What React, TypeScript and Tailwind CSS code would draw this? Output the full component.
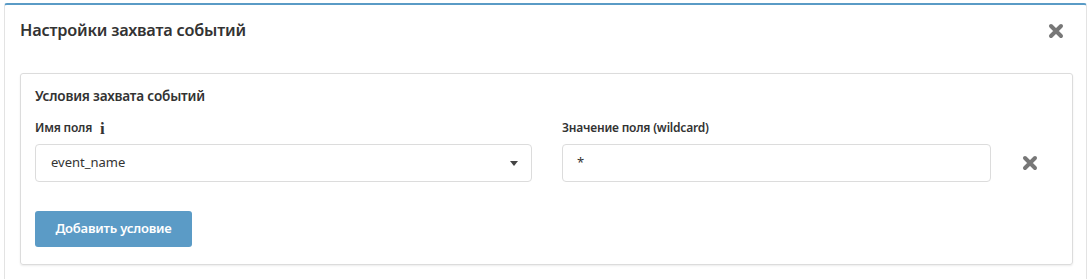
import React from "react";

const TimesIcon = ({ className = "" }: { className?: string }) => (
  <svg viewBox="0 0 16 16" className={className} aria-hidden="true">
    <path
      d="M3 3 L13 13 M13 3 L3 13"
      stroke="currentColor"
      strokeWidth="4"
      strokeLinecap="round"
    />
  </svg>
);

const App = () => {
  return (
    <div
      className="h-[279px] w-[1092px] overflow-hidden bg-white pl-[4px] pr-[5px] pt-[3px] text-[#333]"
      style={{ fontFamily: '"Noto Sans", "Open Sans", sans-serif' }}
    >
      <div className="h-[300px] rounded-t-[3px] border border-t-2 border-[#e3e3e3] border-t-[#5a9bc6] bg-white">
        {/* Header */}
        <div className="flex h-[55px] items-center justify-between pb-[4px] pl-[15px] pr-[22px]">
          <h3 className="text-[16.3px] font-semibold tracking-[-0.2px] text-[#333]">
            Настройки захвата событий
          </h3>
          <TimesIcon className="h-[16px] w-[16px] text-[#777]" />
        </div>

        {/* Conditions card */}
        <div className="ml-[15px] mr-[13px] mt-[13px] h-[192px] rounded-[3px] border border-[#dcdcdc] px-[14px] pt-[12px] shadow-[0_1px_2px_rgba(0,0,0,0.08)]">
          <h4 className="text-[13.6px] font-semibold leading-[20px] tracking-[-0.2px] text-[#333]">
            Условия захвата событий
          </h4>

          <div className="mt-[13px] flex items-end">
            <div className="w-[497px]">
              <div className="mb-[7px] flex items-center gap-[8px] text-[12px] font-semibold leading-[18px] tracking-[-0.2px]">
                Имя поля
                <span className="font-['Liberation_Serif'] text-[17px] font-bold leading-none text-[#333]">
                  i
                </span>
              </div>
              <div className="flex h-[38px] items-center justify-between rounded-[4px] border border-[#dcdcdc] pl-[15px] pr-[13px] text-[13px] text-[#333]">
                <span>event_name</span>
                <svg viewBox="0 0 10 6" className="h-[5px] w-[8px] text-[#444]">
                  <path d="M0 0 L10 0 L5 6 Z" fill="currentColor" />
                </svg>
              </div>
            </div>

            <div className="ml-[30px] w-[429px]">
              <div className="mb-[7px] text-[12px] font-semibold leading-[18px] tracking-[-0.2px]">
                Значение поля (wildcard)
              </div>
              <div className="flex h-[38px] items-center rounded-[4px] border border-[#dcdcdc] pl-[14px] text-[13px] text-[#333]">
                *
              </div>
            </div>

            <div className="flex h-[38px] flex-1 items-center justify-center pl-[10px]">
              <TimesIcon className="h-[16px] w-[16px] text-[#777]" />
            </div>
          </div>

          <button className="mt-[29px] h-[36px] w-[157px] rounded-[3px] bg-[#5b9bc6] text-[13px] font-semibold tracking-[-0.2px] text-white">
            Добавить условие
          </button>
        </div>
      </div>
    </div>
  );
};

export default App;
